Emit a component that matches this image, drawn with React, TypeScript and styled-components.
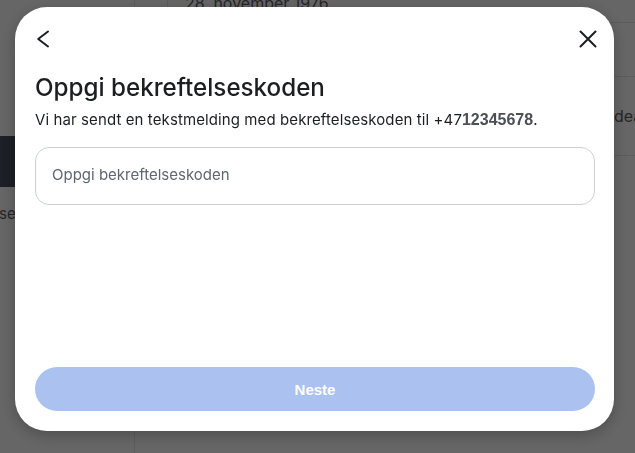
import styled, { createGlobalStyle } from "styled-components";

const GlobalStyle = createGlobalStyle`
  * { box-sizing: border-box; }
  html, body { margin: 0; padding: 0; }
  body {
    background: #ffffff;
    font-family: Inter, "Noto Sans", sans-serif;
    color: #1c1e21;
    overflow: hidden;
  }
`;

const BackIcon = () => (
  <svg width="14" height="18" viewBox="0 0 14 18" fill="none">
    <polyline
      points="12,1.5 2.2,9 12,16.5"
      stroke="#1c1e21"
      strokeWidth="2"
      strokeLinecap="round"
      strokeLinejoin="round"
    />
  </svg>
);

const CloseIcon = () => (
  <svg width="20" height="20" viewBox="0 0 20 20" fill="none">
    <path
      d="M2.5 2.5 L17.5 17.5 M17.5 2.5 L2.5 17.5"
      stroke="#1c1e21"
      strokeWidth="2"
      strokeLinecap="round"
    />
  </svg>
);

const App = () => {
  return (
    <>
      <GlobalStyle />
      <Page>
        <Sidebar>
          <ActiveItem />
          <SidebarItem>sertifikater</SidebarItem>
        </Sidebar>
        <Main>
          <TopRow>
            <Gutter />
            <DateText>28. november 1976</DateText>
          </TopRow>
          <Row $height={54} />
          <Row $height={79}>
            <Label>Kontoinnstillinger</Label>
            <Value>deaktivert</Value>
          </Row>
        </Main>
      </Page>

      <Backdrop>
        <Modal role="dialog" aria-labelledby="code-title">
          <Header>
            <IconButton aria-label="Tilbake">
              <BackIcon />
            </IconButton>
            <IconButton aria-label="Lukk">
              <CloseIcon />
            </IconButton>
          </Header>
          <Title id="code-title">Oppgi bekreftelseskoden</Title>
          <Description>
            Vi har sendt en tekstmelding med bekreftelseskoden til +47
            <Phone>12345678</Phone>.
          </Description>
          <CodeInput placeholder="Oppgi bekreftelseskoden" />
          <NextButton disabled>Neste</NextButton>
        </Modal>
      </Backdrop>
    </>
  );
};

export default App;

const Page = styled.div`
  display: grid;
  grid-template-columns: 135px 1fr;
  height: 100vh;
  background: #ffffff;
`;

const Sidebar = styled.aside`
  border-right: 1px solid #e4e6eb;
  padding-top: 136px;
  display: flex;
  flex-direction: column;
`;

const ActiveItem = styled.div`
  height: 51px;
  background: #464e5c;
`;

const SidebarItem = styled.div`
  margin-top: 17px;
  font-size: 15px;
  line-height: 20px;
  color: #5e5e5e;
  margin-left: -1px;
`;

const Main = styled.main`
  display: flex;
  flex-direction: column;
  margin-top: -7px;
  white-space: nowrap;
`;

const TopRow = styled.div`
  height: 30px;
  display: grid;
  grid-template-columns: 33px 1fr;
  border-bottom: 1px solid #e4e6eb;
`;

const Gutter = styled.div`
  border-right: 1px solid #e4e6eb;
`;

const Row = styled.div<{ $height: number }>`
  height: ${(p) => p.$height}px;
  border-bottom: 1px solid #e4e6eb;
  padding-left: 50px;
  display: grid;
  grid-template-columns: 429px auto;
  align-items: center;
`;

const DateText = styled.span`
  padding-left: 17px;
  font-size: 16px;
  line-height: 20px;
  color: #606060;
`;

const Label = styled.span`
  font-size: 15px;
  color: #606060;
`;

const Value = styled.span`
  font-size: 16px;
  color: #606060;
`;

const Backdrop = styled.div`
  position: fixed;
  inset: 0;
  background: rgba(0, 0, 0, 0.6);
  padding: 7px 0 0 15px;
`;

const Modal = styled.div`
  width: 599px;
  height: 424px;
  background: #ffffff;
  border-radius: 32px;
  box-shadow: 0 4px 16px rgba(0, 0, 0, 0.25);
  display: flex;
  flex-direction: column;
  padding: 0 19px 20px 20px;
`;

const Header = styled.div`
  display: flex;
  justify-content: space-between;
  align-items: center;
  height: 20px;
  margin: 22px -3px 0 1px;
`;

const IconButton = styled.button`
  display: flex;
  align-items: center;
  justify-content: center;
  padding: 0;
  border: none;
  background: none;
  cursor: pointer;
`;

const Title = styled.h2`
  margin: 25px 0 0;
  font-size: 24.2px;
  line-height: 28px;
  font-weight: 500;
  color: #1c1e21;
`;

const Description = styled.p`
  margin: 8px 0 0;
  font-size: 15px;
  line-height: 20px;
  letter-spacing: 0.1px;
  color: #1c1e21;
`;

const Phone = styled.b`
  font-family: "Liberation Sans", Arial, sans-serif;
  font-size: 16px;
  font-weight: 700;
  letter-spacing: 0;
  color: #4b4f56;
`;

const CodeInput = styled.input`
  margin-top: 17px;
  height: 58px;
  width: 100%;
  border: 1px solid #ccd0d5;
  border-radius: 14px;
  padding: 0 16px 3px;
  font-family: Inter, "Noto Sans", sans-serif;
  font-size: 15px;
  color: #1c1e21;
  outline: none;

  &::placeholder {
    color: #606770;
  }
`;

const NextButton = styled.button`
  margin-top: auto;
  height: 44px;
  width: 100%;
  border: none;
  border-radius: 22px;
  background: #abc2f1;
  color: #ffffff;
  font-family: "Liberation Sans", Arial, sans-serif;
  font-size: 15px;
  font-weight: 700;
  cursor: default;

  &:disabled {
    color: #ffffff;
    opacity: 1;
  }
`;
